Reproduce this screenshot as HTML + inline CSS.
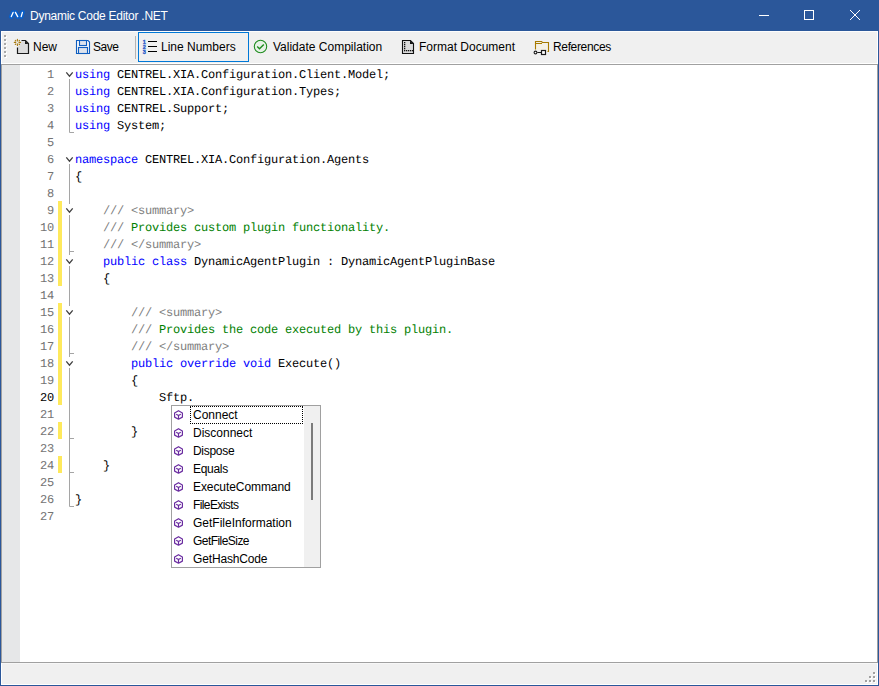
<!DOCTYPE html>
<html><head><meta charset="utf-8">
<style>
*{box-sizing:border-box;margin:0;padding:0}
html,body{width:879px;height:686px;overflow:hidden;background:#2b579a;font-family:"Liberation Sans",sans-serif}
.abs{position:absolute}
#title{left:0;top:0;width:879px;height:31px;background:#2b579a}
#title .t{left:30px;top:8px;font-size:12px;letter-spacing:-0.27px;color:#fff;white-space:pre;line-height:16px}
#tb{left:1px;top:31px;width:877px;height:33px;background:#f0f0f0;border-top:1px solid #fdfdfd;border-left:1px solid #fff;border-right:1px solid #fff;border-bottom:1px solid #fff}
.lbl{font-size:12px;color:#000;white-space:pre;line-height:16px;top:39px}
#ed{left:1px;top:64px;width:877px;height:599px;background:#fff;border:1px solid #a0a0a0}
#margin{left:2px;top:65px;width:18px;height:597px;background:#e6e7e8}
#status{left:1px;top:663px;width:877px;height:22px;background:#f0f0f0;border-top:1px solid #f7f7f7;border-left:1px solid #fff;border-right:1px solid #fff;border-bottom:1px solid #fff}
.code{font-family:"Liberation Mono",monospace;font-size:12px;letter-spacing:-0.2px;line-height:17px;white-space:pre;color:#000;text-rendering:geometricPrecision}
.ln{left:20px;width:34px;text-align:right;color:#737373}
.k{color:#0000ff}.c{color:#808080}.g{color:#008000}
.yb{left:58px;width:4px;background:#fee95c}
#popup{left:171px;top:405px;width:150px;height:163px;background:#fff;border:1px solid #a0a0a0;overflow:hidden}
.it{position:absolute;left:0;width:132px;height:18px}
.it span{position:absolute;left:21px;top:1px;font-size:12px;line-height:16px;white-space:pre;color:#000}
.it svg{position:absolute;left:2px;top:4px;overflow:visible}
</style></head><body>
<div id="title" class="abs">
 <svg class="abs" style="left:0;top:0" width="40" height="31">
  <path d="M13.1 12.4 L11.3 16.6 M15.4 12.4 L17.7 16.6 M22.4 12.4 L21.2 16.6" stroke="#0a5fc8" stroke-width="4.8" stroke-linecap="round" stroke-linejoin="round"/>
  <path d="M13.1 12.4 L11.3 16.6 M15.4 12.4 L17.7 16.6 M22.4 12.4 L21.2 16.6" stroke="#fff" stroke-width="1.3" stroke-linecap="round"/>
 </svg>
 <div class="abs t">Dynamic Code Editor .NET</div>
 <svg class="abs" style="left:740px;top:0" width="139" height="31">
  <path d="M19 15.5 H29" stroke="#fff" stroke-width="1"/>
  <rect x="64.5" y="10.5" width="9" height="9" fill="none" stroke="#fff" stroke-width="1"/>
  <path d="M110 10 L120 20 M120 10 L110 20" stroke="#fff" stroke-width="1"/>
 </svg>
</div>
<div id="tb" class="abs"></div>
<svg class="abs" style="left:0;top:31px" width="879" height="33">
 <!-- grip -->
 <g fill="#fff">
  <rect x="5" y="5" width="2" height="2"/><rect x="5" y="9" width="2" height="2"/><rect x="5" y="13" width="2" height="2"/>
  <rect x="5" y="17" width="2" height="2"/><rect x="5" y="21" width="2" height="2"/><rect x="5" y="25" width="2" height="2"/>
 </g>
 <g fill="#a8a8a8">
  <rect x="4" y="4" width="2" height="2"/><rect x="4" y="8" width="2" height="2"/><rect x="4" y="12" width="2" height="2"/>
  <rect x="4" y="16" width="2" height="2"/><rect x="4" y="20" width="2" height="2"/><rect x="4" y="24" width="2" height="2"/>
 </g>
 <!-- new icon -->
 <path d="M17.5 16.5 V22.5 H28.5 V12.5 L25.5 9.5 H21.5" fill="#dcdcdc" stroke="#1a1a1a" stroke-width="1.2"/>
 <path d="M25 9.5 L28.5 13 H25 Z" fill="#1a1a1a"/>
 <g stroke="#a87a10" stroke-width="1.1" stroke-linecap="round">
  <path d="M17.4 8.4 V9.9 M17.4 12.9 V14.4 M14.3 11.4 H15.8 M19 11.4 H20.5 M15.3 9.3 L15.8 9.8 M19 13 L19.5 13.5 M19.5 9.3 L19 9.8 M15.8 13 L15.3 13.5"/>
 </g>
 <!-- save icon -->
 <path d="M76.5 9.5 H88 L89.5 11 V22.5 H76.5 Z" fill="#f5f7fa" stroke="#0f5ec0" stroke-width="1.1"/>
 <rect x="79.5" y="9.5" width="7" height="5" fill="#dde3ed" stroke="#0f5ec0" stroke-width="1.1"/>
 <rect x="78.5" y="16.5" width="9" height="6" fill="#dde3ed" stroke="#0f5ec0" stroke-width="1.1"/>
 <!-- separator -->
 <rect x="135" y="5" width="1" height="23" fill="#b4b4b4"/>
 <!-- checked button -->
 <rect x="138.5" y="1.5" width="110" height="29" fill="none" stroke="#0078d7" stroke-width="1"/>
 <g fill="#2a5cc8" stroke="#2a5cc8" stroke-width="0.35" font-family="Liberation Sans" font-size="5.6" font-weight="bold">
  <text x="142.8" y="12.8">1</text><text x="142.8" y="17.8">2</text><text x="142.8" y="22.8">3</text>
 </g>
 <path d="M148 10.5 H157 M148 15.5 H157 M148 20.5 H157" stroke="#000" stroke-width="1.2"/>
 <!-- validate -->
 <circle cx="260.5" cy="15.5" r="6.2" fill="#e6f2e6" stroke="#1e8c1e" stroke-width="1.1"/>
 <path d="M257.2 15.6 L259.5 17.7 L263.8 13.5" fill="none" stroke="#1e8c1e" stroke-width="1.4"/>
 <!-- format -->
 <path d="M402.5 9.5 H410.5 L413.5 12.5 V22.5 H402.5 Z" fill="#dcdcdc" stroke="#111" stroke-width="1.1"/>
 <path d="M410 9.5 L413.5 13 H410 Z" fill="#111"/>
 <g fill="#111">
  <rect x="404" y="11" width="1.3" height="1.3"/><rect x="404" y="13" width="1.3" height="1.3"/><rect x="404" y="15" width="1.3" height="1.3"/><rect x="404" y="17" width="1.3" height="1.3"/><rect x="404" y="19" width="1.3" height="1.3"/>
  <rect x="406" y="19" width="1.3" height="1.3"/><rect x="408" y="19" width="1.3" height="1.3"/><rect x="410" y="19" width="1.3" height="1.3"/><rect x="412" y="19" width="1.3" height="1.3"/>
 </g>
 <!-- references -->
 <path d="M535.5 18.5 V10.5 H541.5 L542.5 11.5 H548.5 V20.5 H547.5" fill="#f4f0e4" stroke="#a77a00" stroke-width="1.1"/>
 <path d="M535.5 12.5 H542" stroke="#a77a00" stroke-width="1"/>
 <circle cx="535.5" cy="21.5" r="1.4" fill="#fff" stroke="#1a1a1a" stroke-width="1.1"/>
 <path d="M537.3 21.5 H541.5" stroke="#1a1a1a" stroke-width="1"/>
 <rect x="541.5" y="19.5" width="4" height="4" fill="#fff" stroke="#1a1a1a" stroke-width="1.2"/>
 <!-- bottom border line -->
</svg>
<div class="abs lbl" style="left:33px">New</div>
<div class="abs lbl" style="left:93px;letter-spacing:-0.5px">Save</div>
<div class="abs lbl" style="left:161px">Line Numbers</div>
<div class="abs lbl" style="left:273px">Validate Compilation</div>
<div class="abs lbl" style="left:419px">Format Document</div>
<div class="abs lbl" style="left:553px;letter-spacing:-0.35px">References</div>

<div id="ed" class="abs"></div>
<div id="margin" class="abs"></div>
<div id="status" class="abs"></div>
<svg class="abs" style="left:860px;top:668px" width="18" height="17">
 <g fill="#fff">
  <rect x="14" y="5" width="2" height="2"/>
  <rect x="10" y="9" width="2" height="2"/><rect x="14" y="9" width="2" height="2"/>
  <rect x="6" y="13" width="2" height="2"/><rect x="10" y="13" width="2" height="2"/><rect x="14" y="13" width="2" height="2"/>
 </g>
 <g fill="#a0a0a0">
  <rect x="13" y="4" width="2" height="2"/>
  <rect x="9" y="8" width="2" height="2"/><rect x="13" y="8" width="2" height="2"/>
  <rect x="5" y="12" width="2" height="2"/><rect x="9" y="12" width="2" height="2"/><rect x="13" y="12" width="2" height="2"/>
 </g>
</svg>

<!-- yellow change bars -->
<div class="abs yb" style="top:201px;height:85px"></div>
<div class="abs yb" style="top:303px;height:102px"></div>
<div class="abs yb" style="top:422px;height:17px"></div>
<div class="abs yb" style="top:456px;height:17px"></div>

<!-- fold margin -->
<svg class="abs" style="left:60px;top:65px" width="20" height="460">
 <g stroke="#a5a5a5" stroke-width="1" fill="none">
  <path d="M9.5 14 V67.5 H14"/>
  <path d="M9.5 99 V139 M9.5 150 V190 M9.5 201 V241 M9.5 252 V292 M9.5 303 V441.5 H14"/>
  <path d="M9.5 186.5 H14 M9.5 288.5 H14 M9.5 373.5 H14 M9.5 407.5 H14"/>
 </g>
 <g stroke="#404040" stroke-width="1.3" fill="none">
  <path d="M6.3 7.4 L9.5 11.2 L12.7 7.4"/>
  <path d="M6.3 92.4 L9.5 96.2 L12.7 92.4"/>
  <path d="M6.3 143.4 L9.5 147.2 L12.7 143.4"/>
  <path d="M6.3 194.4 L9.5 198.2 L12.7 194.4"/>
  <path d="M6.3 245.4 L9.5 249.2 L12.7 245.4"/>
  <path d="M6.3 296.4 L9.5 300.2 L12.7 296.4"/>
 </g>
</svg>

<div class="abs code ln" style="top:67px">1
2
3
4
5
6
7
8
9
10
11
12
13
14
15
16
17
18
19
<span style="color:#000">20</span>
21
22
23
24
25
26
27</div>
<div class="abs code" style="left:75px;top:67px"><span class="k">using</span> CENTREL.XIA.Configuration.Client.Model;
<span class="k">using</span> CENTREL.XIA.Configuration.Types;
<span class="k">using</span> CENTREL.Support;
<span class="k">using</span> System;

<span class="k">namespace</span> CENTREL.XIA.Configuration.Agents
{

    <span class="c">/// &lt;summary&gt;</span>
    <span class="c">///</span> <span class="g">Provides custom plugin functionality.</span>
    <span class="c">/// &lt;/summary&gt;</span>
    <span class="k">public</span> <span class="k">class</span> DynamicAgentPlugin : DynamicAgentPluginBase
    {

        <span class="c">/// &lt;summary&gt;</span>
        <span class="c">///</span> <span class="g">Provides the code executed by this plugin.</span>
        <span class="c">/// &lt;/summary&gt;</span>
        <span class="k">public</span> <span class="k">override</span> <span class="k">void</span> Execute()
        {
            Sftp.

        }

    }

}
</div>

<div id="popup" class="abs">
 <div class="it" style="top:0"><svg width="12" height="12"><use href="#cube"/></svg><span>Connect</span></div>
 <div class="it" style="top:18px"><svg width="12" height="12"><use href="#cube"/></svg><span>Disconnect</span></div>
 <div class="it" style="top:36px"><svg width="12" height="12"><use href="#cube"/></svg><span style="letter-spacing:-0.3px">Dispose</span></div>
 <div class="it" style="top:54px"><svg width="12" height="12"><use href="#cube"/></svg><span style="letter-spacing:-0.3px">Equals</span></div>
 <div class="it" style="top:72px"><svg width="12" height="12"><use href="#cube"/></svg><span style="letter-spacing:-0.08px">ExecuteCommand</span></div>
 <div class="it" style="top:90px"><svg width="12" height="12"><use href="#cube"/></svg><span style="letter-spacing:-0.6px">FileExists</span></div>
 <div class="it" style="top:108px"><svg width="12" height="12"><use href="#cube"/></svg><span>GetFileInformation</span></div>
 <div class="it" style="top:126px"><svg width="12" height="12"><use href="#cube"/></svg><span style="letter-spacing:-0.55px">GetFileSize</span></div>
 <div class="it" style="top:144px"><svg width="12" height="12"><use href="#cube"/></svg><span style="letter-spacing:-0.15px">GetHashCode</span></div>
 <div class="abs" style="left:18px;top:0;width:113px;height:18px;border:1px dotted #000"></div>
 <div class="abs" style="left:132px;top:0;width:16px;height:161px;background:#f0f0f0"></div>
 <div class="abs" style="left:139px;top:17px;width:2px;height:77px;background:#7b7b7b"></div>
</div>
<svg width="0" height="0" style="position:absolute">
 <defs>
  <g id="cube" fill="none" stroke="#6a2ca0" stroke-width="1.2" stroke-linejoin="round">
   <path d="M4.5 0.7 L8.4 2.9 V7.1 L4.5 9.2 L0.6 7.1 V2.9 Z"/>
   <path d="M2.2 4.2 L4.5 5.5 L6.8 4.2 M4.5 5.5 V9"/>
  </g>
 </defs>
</svg>
</body></html>
